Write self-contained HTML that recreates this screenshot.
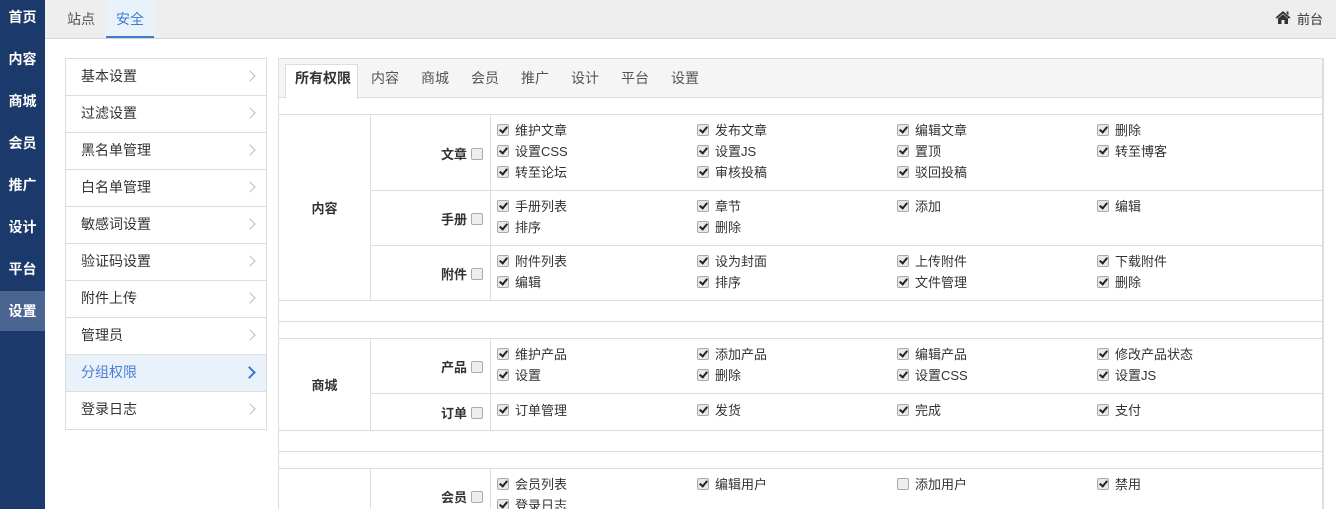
<!DOCTYPE html>
<html><head><meta charset="utf-8"><style>
*{margin:0;padding:0;box-sizing:border-box}
html,body{width:1336px;height:509px;overflow:hidden}
body{background:#fff;font-family:"Liberation Sans","Noto Sans CJK SC",sans-serif;font-size:13px;color:#333;position:relative}
.a{position:absolute}
#side{left:0;top:0;width:45px;height:509px;background:#1b396a}
#side div{position:absolute;left:0;width:45px;height:40px;line-height:40px;text-align:center;color:#fff;font-size:14px;font-weight:bold}
#top{left:45px;top:0;width:1291px;height:39px;background:#eee;border-bottom:1px solid #d6d6d6}
.menu{left:65px;width:202px;border:1px solid #ddd;background:#fff}
.menu div{height:37px;line-height:34px;border-bottom:1px solid #ddd;padding-left:15px;font-size:14px;position:relative}
.menu div:last-child{border-bottom:0}
.menu div:after{content:"";position:absolute;right:12px;top:13px;width:7px;height:7px;border-top:1.5px solid #bbb;border-right:1.5px solid #bbb;transform:rotate(45deg)}
.menu div.on{background:#e9f1fb;color:#4a7fd4}
.menu div.on:after{border-color:#3a75d0;border-width:2px 2px 0 0}
#panel{left:278px;top:58px;width:1046px;height:460px;border:1px solid #ddd;border-right:2px solid #ddd}
#tabs{left:279px;top:59px;width:1043px;height:39px;background:#f5f5f5;border-bottom:1px solid #ddd}
#tabs span{position:absolute;top:9px;font-size:14px;color:#555}
.h{position:absolute;height:1px;background:#ddd}
.v{position:absolute;width:1px;background:#ddd}
.g{position:absolute;left:490px;padding:5px 0 0 7px;line-height:21px}
.g span{display:inline-block;width:200px;white-space:nowrap}
.c,.u{display:inline-block;width:12px;height:12px;border:1px solid #aaa;border-radius:2px;background:#e8e8e8;vertical-align:-1px;margin-right:6px;position:relative}
.c:after{content:"";position:absolute;left:3px;top:0px;width:3px;height:6px;border:solid #222;border-width:0 2px 2px 0;transform:rotate(40deg)}
.u{background:#eee;margin:0 0 0 4px}
.lb{position:absolute;left:370px;width:113px;text-align:right;font-weight:bold;font-size:13px;color:#333}
.lb1{position:absolute;left:279px;width:91px;text-align:center;font-weight:bold}
</style></head><body>
<div id="side" class="a">
<div style="top:-3px">首页</div><div style="top:39px">内容</div><div style="top:81px">商城</div><div style="top:123px">会员</div><div style="top:165px">推广</div><div style="top:207px">设计</div><div style="top:249px">平台</div><div style="top:291px;background:#4a6590">设置</div>
</div>
<div id="top" class="a">
<span class="a" style="left:22px;top:9px;font-size:14px;color:#555">站点</span>
<div class="a" style="left:61px;top:0;width:48px;height:38px;background:#e9f2fb;border-bottom:2px solid #3d7ecf"></div>
<span class="a" style="left:71px;top:9px;font-size:14px;color:#3d7ecf">安全</span>
<svg class="a" style="left:1230px;top:10px" width="16" height="14" viewBox="0 0 16 14"><path d="M8 1 L0.5 7.5 L2 8.8 L8 3.5 L14 8.8 L15.5 7.5 Z M3 8.5 L3 14 L6.5 14 L6.5 10 L9.5 10 L9.5 14 L13 14 L13 8.5 L8 4.3 Z M11.5 1.5 L13.5 1.5 L13.5 5 L11.5 3.3Z" fill="#333"/></svg>
<span class="a" style="left:1252px;top:9px;font-size:13px">前台</span>
</div>
<div class="a menu" style="top:58px">
<div>基本设置</div><div>过滤设置</div><div>黑名单管理</div><div>白名单管理</div><div>敏感词设置</div><div>验证码设置</div><div>附件上传</div><div>管理员</div><div class="on">分组权限</div><div>登录日志</div>
</div>
<div id="panel" class="a"></div>
<div id="tabs" class="a">
<div class="a" style="left:6px;top:5px;width:73px;height:35px;background:#fff;border:1px solid #ddd;border-bottom:0"></div>
<span style="left:16px;font-weight:bold;color:#333">所有权限</span><span style="left:92px">内容</span><span style="left:142px">商城</span><span style="left:192px">会员</span><span style="left:242px">推广</span><span style="left:292px">设计</span><span style="left:342px">平台</span><span style="left:392px">设置</span>
</div>
<div class="h" style="left:279px;width:1043px;top:114px"></div>
<div class="h" style="left:370px;width:952px;top:190px"></div>
<div class="h" style="left:370px;width:952px;top:245px"></div>
<div class="h" style="left:279px;width:1043px;top:300px"></div>
<div class="h" style="left:279px;width:1043px;top:321px"></div>
<div class="h" style="left:279px;width:1043px;top:338px"></div>
<div class="h" style="left:370px;width:952px;top:393px"></div>
<div class="h" style="left:279px;width:1043px;top:430px"></div>
<div class="h" style="left:279px;width:1043px;top:451px"></div>
<div class="h" style="left:279px;width:1043px;top:468px"></div>
<div class="v" style="left:370px;top:114px;height:186px"></div>
<div class="v" style="left:490px;top:114px;height:186px"></div>
<div class="v" style="left:370px;top:338px;height:92px"></div>
<div class="v" style="left:490px;top:338px;height:92px"></div>
<div class="v" style="left:370px;top:468px;height:41px"></div>
<div class="v" style="left:490px;top:468px;height:41px"></div>
<div class="lb1" style="top:198px">内容</div>
<div class="lb1" style="top:375px">商城</div>
<div class="lb" style="top:144px">文章<i class="u"></i></div>
<div class="lb" style="top:209px">手册<i class="u"></i></div>
<div class="lb" style="top:264px">附件<i class="u"></i></div>
<div class="lb" style="top:357px">产品<i class="u"></i></div>
<div class="lb" style="top:403px">订单<i class="u"></i></div>
<div class="lb" style="top:487px">会员<i class="u"></i></div>
<div class="g" style="top:114px;padding-top:6px"><span><i class="c"></i>维护文章</span><span><i class="c"></i>发布文章</span><span><i class="c"></i>编辑文章</span><span><i class="c"></i>删除</span><br><span><i class="c"></i>设置CSS</span><span><i class="c"></i>设置JS</span><span><i class="c"></i>置顶</span><span><i class="c"></i>转至博客</span><br><span><i class="c"></i>转至论坛</span><span><i class="c"></i>审核投稿</span><span><i class="c"></i>驳回投稿</span></div>
<div class="g" style="top:190px;padding-top:6px"><span><i class="c"></i>手册列表</span><span><i class="c"></i>章节</span><span><i class="c"></i>添加</span><span><i class="c"></i>编辑</span><br><span><i class="c"></i>排序</span><span><i class="c"></i>删除</span></div>
<div class="g" style="top:245px;padding-top:6px"><span><i class="c"></i>附件列表</span><span><i class="c"></i>设为封面</span><span><i class="c"></i>上传附件</span><span><i class="c"></i>下载附件</span><br><span><i class="c"></i>编辑</span><span><i class="c"></i>排序</span><span><i class="c"></i>文件管理</span><span><i class="c"></i>删除</span></div>
<div class="g" style="top:338px;padding-top:6px"><span><i class="c"></i>维护产品</span><span><i class="c"></i>添加产品</span><span><i class="c"></i>编辑产品</span><span><i class="c"></i>修改产品状态</span><br><span><i class="c"></i>设置</span><span><i class="c"></i>删除</span><span><i class="c"></i>设置CSS</span><span><i class="c"></i>设置JS</span></div>
<div class="g" style="top:393px;padding-top:7px"><span><i class="c"></i>订单管理</span><span><i class="c"></i>发货</span><span><i class="c"></i>完成</span><span><i class="c"></i>支付</span></div>
<div class="g" style="top:468px;padding-top:6px"><span><i class="c"></i>会员列表</span><span><i class="c"></i>编辑用户</span><span><i class="u" style="margin:0 6px 0 0"></i>添加用户</span><span><i class="c"></i>禁用</span><br><span><i class="c"></i>登录日志</span></div>
</body></html>
